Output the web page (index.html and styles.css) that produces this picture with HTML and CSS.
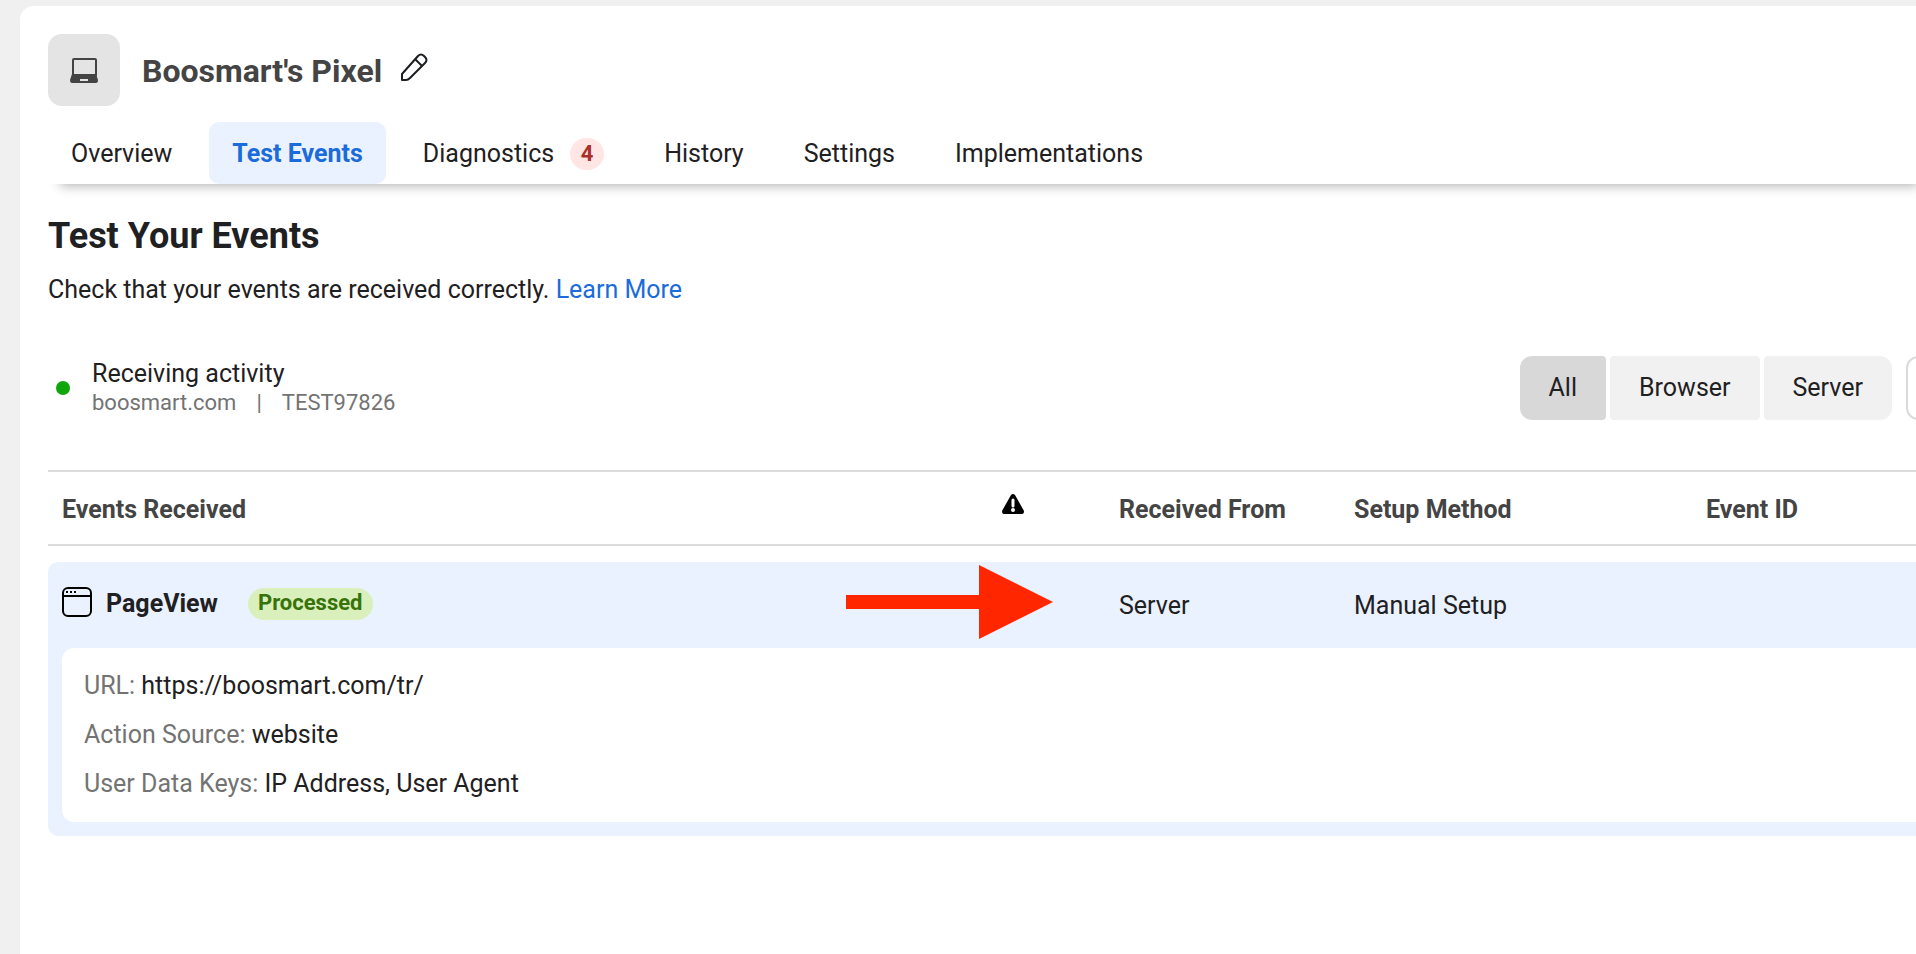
FILE: index.html
```html
<!DOCTYPE html>
<html lang="en">
<head>
<meta charset="utf-8">
<title>Boosmart's Pixel</title>
<link rel="stylesheet" href="styles.css">
</head>
<body>
<main class="panel">
  <header class="source">
    <span class="source-tile">
      <svg width="28" height="26" viewBox="0 0 28 26" aria-hidden="true">
        <rect x="3" y="2" width="23" height="17" rx="1" fill="none" stroke="#444" stroke-width="2"/>
        <path d="M2 17H26L28 23Q28 26 26 26H2Q0 26 0 23Z" fill="#444"/>
        <rect x="10" y="22" width="8" height="2" fill="#e4e4e4"/>
      </svg>
    </span>
    <h1 class="source-name">Boosmart's Pixel</h1>
    <button class="edit" type="button" aria-label="Edit name">
      <svg width="28" height="30" viewBox="0 0 28 30" fill="none" stroke="#1c1e21" stroke-width="2" stroke-linejoin="round" aria-hidden="true">
        <path d="M2 22L18 4Q21 1 24 4L25 5Q28 8 25 11L10 26Q8 28 6 28H2Z"/>
        <path d="M15 7L22 14"/>
      </svg>
    </button>
  </header>

  <nav class="tabs">
    <a class="tab" href="#overview">Overview</a>
    <a class="tab tab-active" href="#test" aria-current="page">Test Events</a>
    <a class="tab" href="#diagnostics">Diagnostics <span class="count">4</span></a>
    <a class="tab" href="#history">History</a>
    <a class="tab" href="#settings">Settings</a>
    <a class="tab" href="#implementations">Implementations</a>
  </nav>

  <section class="intro">
    <h2 class="intro-title">Test Your Events</h2>
    <p class="intro-text">Check that your events are received correctly. <a class="link" href="#learn">Learn More</a></p>
  </section>

  <section class="toolbar">
    <div class="status">
      <span class="dot"></span>
      <div>
        <p class="status-title">Receiving activity</p>
        <p class="status-meta"><span>boosmart.com</span><span>|</span><span>TEST97826</span></p>
      </div>
    </div>
    <div class="filters">
      <div class="segments">
        <button class="segment segment-on" type="button" aria-pressed="true">All</button>
        <button class="segment" type="button">Browser</button>
        <button class="segment" type="button">Server</button>
      </div>
      <button class="more" type="button" aria-label="More options"></button>
    </div>
  </section>

  <table class="events">
    <colgroup>
      <col>
      <col class="col-warning">
      <col class="col-from">
      <col class="col-setup">
      <col class="col-id">
    </colgroup>
    <thead>
      <tr>
        <th scope="col">Events Received</th>
        <th scope="col">
          <svg class="warning" width="22" height="20" viewBox="0 0 22 20" role="img" aria-label="Warnings">
            <path d="M9 1Q11 -1 13 1L22 17Q22 20 20 20H2Q0 20 0 17Z" fill="#000"/>
            <path d="M11 6V12" stroke="#fff" stroke-width="3" stroke-linecap="round"/>
            <circle cx="11" cy="16" r="2" fill="#fff"/>
          </svg>
        </th>
        <th scope="col">Received From</th>
        <th scope="col">Setup Method</th>
        <th scope="col">Event ID</th>
      </tr>
    </thead>
    <tbody>
      <tr class="event">
        <td>
          <div class="event-name">
            <svg class="event-icon" width="30" height="30" viewBox="0 0 30 30" fill="none" stroke="#000" stroke-width="2" aria-hidden="true">
              <rect x="1" y="1" width="28" height="28" rx="5"/>
              <path d="M1 9H29"/>
              <path d="M4 5H14" stroke-dasharray="2 2"/>
            </svg>
            <strong>PageView</strong>
            <span class="pill">Processed</span>
          </div>
        </td>
        <td></td>
        <td class="from">
          <svg class="arrow" width="208" height="76" viewBox="0 0 208 76" aria-hidden="true">
            <path d="M0 31H133V1L207 38L133 75V45H0Z" fill="#ff2600"/>
          </svg>
          Server
        </td>
        <td>Manual Setup</td>
        <td></td>
      </tr>
      <tr class="detail">
        <td colspan="5">
          <dl class="facts">
            <div><dt>URL:</dt> <dd>https://boosmart.com/tr/</dd></div>
            <div><dt>Action Source:</dt> <dd>website</dd></div>
            <div><dt>User Data Keys:</dt> <dd>IP Address, User Agent</dd></div>
          </dl>
        </td>
      </tr>
    </tbody>
  </table>
</main>
</body>
</html>
```
FILE: styles.css
```css
* { box-sizing: border-box; }

body {
  margin: 0;
  padding: 6px 0 0 20px;
  background: #f0f0f0;
  color: #1f2022;
  font: 25px/30px Roboto, "Liberation Sans", sans-serif;
}

h1, h2, p, dl, dd { margin: 0; }

button {
  padding: 0;
  border: 0;
  background: none;
  color: inherit;
  font: inherit;
}

.panel {
  min-height: calc(100vh - 6px);
  padding: 28px 0 0 28px;
  border-top-left-radius: 14px;
  background: #fff;
  overflow: hidden;
}

.source {
  display: flex;
  align-items: center;
}

.source-tile {
  display: grid;
  place-items: center;
  width: 72px;
  height: 72px;
  border-radius: 14px;
  background: #e4e4e4;
}

.source-name {
  margin-left: 22px;
  padding-top: 1px;
  color: #444;
  font-size: 32px;
  line-height: 40px;
}

.edit {
  display: flex;
  margin-left: 18px;
  padding-bottom: 6px;
}

.tabs {
  display: flex;
  gap: 14px;
  margin: 16px -14px 0 0;
  box-shadow: 0 14px 12px -12px rgba(0, 0, 0, 0.3);
}

.tab {
  display: flex;
  align-items: center;
  height: 62px;
  padding: 2px 23px 0;
  border-radius: 10px;
  color: inherit;
  text-decoration: none;
}

.tab-active {
  background: #eaf1ff;
  color: #1b6bdb;
  font-weight: 700;
}

.count {
  width: 34px;
  margin-left: 16px;
  border-radius: 16px;
  background: #ffe6e4;
  color: #a8312a;
  font-size: 22px;
  font-weight: 700;
  line-height: 32px;
  text-align: center;
}

.intro { padding-top: 31px; }

.intro-title {
  font-size: 36px;
  line-height: 42px;
}

.intro-text { margin-top: 18px; }

.link {
  color: #1b6bdb;
  text-decoration: none;
}

.toolbar {
  display: flex;
  justify-content: space-between;
  align-items: center;
  margin-top: 51px;
}

.status {
  display: flex;
  align-items: center;
  gap: 22px;
  padding-left: 8px;
}

.dot {
  width: 14px;
  height: 14px;
  border-radius: 50%;
  background: #10a50a;
}

.status-meta {
  display: flex;
  gap: 20px;
  color: #737373;
  font-size: 22px;
  line-height: 28px;
}

.filters {
  display: flex;
  gap: 14px;
  margin-right: -50px;
}

.segments {
  display: flex;
  gap: 4px;
}

.segment {
  height: 64px;
  padding: 0 29px;
  border-radius: 4px;
  background: #f1f1f1;
}

.segment-on { background: #d8d8d8; }

.segment:first-child { border-radius: 12px 4px 4px 12px; }

.segment:last-child { border-radius: 4px 12px 12px 4px; }

.more {
  width: 60px;
  height: 64px;
  border: 2px solid #dadada;
  border-radius: 12px;
}

.events {
  width: 100%;
  margin-top: 50px;
  border-spacing: 0;
  table-layout: fixed;
}

.col-warning { width: 117px; }
.col-from { width: 235px; }
.col-setup { width: 352px; }
.col-id { width: 224px; }

.events th {
  height: 76px;
  padding: 4px 14px 0;
  border: solid #dcdcdc;
  border-width: 2px 0;
  color: #444;
  text-align: left;
}

.warning {
  display: block;
  margin-bottom: 12px;
}

.events tbody::before {
  content: "";
  display: table-row;
  height: 16px;
}

.event td {
  height: 86px;
  padding: 2px 14px 0;
  background: #eaf1ff;
}

.event td:first-child { border-top-left-radius: 10px; }

.event-name {
  display: flex;
  align-items: center;
  gap: 14px;
  padding-bottom: 4px;
}

.event-icon { margin-bottom: 4px; }

.pill {
  height: 32px;
  margin-left: 16px;
  padding: 0 10px;
  border-radius: 16px;
  background: #d9f0bd;
  color: #37730a;
  font-size: 22px;
  font-weight: 700;
  line-height: 30px;
}

.from { position: relative; }

.arrow {
  position: absolute;
  top: 2px;
  right: calc(100% + 51px);
}

.detail td {
  padding: 0 0 14px 14px;
  border-bottom-left-radius: 10px;
  background: #eaf1ff;
}

.facts {
  display: grid;
  gap: 19px;
  padding: 23px 22px;
  border-radius: 12px 0 0 12px;
  background: #fff;
}

.facts dt, .facts dd { display: inline; }

.facts dt { color: #737373; }
```
